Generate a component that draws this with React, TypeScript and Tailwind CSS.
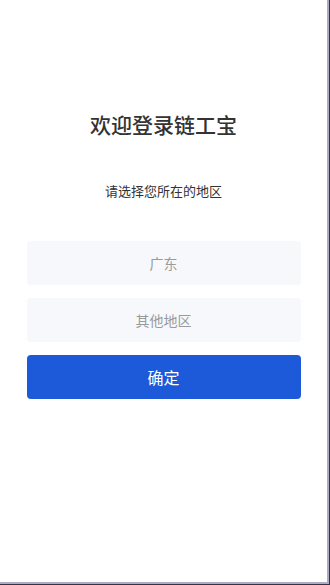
import React from "react"

const font = { fontFamily: '"Noto Sans CJK SC", "Noto Sans", sans-serif' }

const regions = ["广东", "其他地区"]

export default function App() {
  return (
    <div className="w-[330px] h-[585px] bg-[#34324a]" style={font}>
      <div className="w-[329px] h-[584px] bg-white border-r-2 border-b-2 border-[#aeacc0] flex flex-col items-center">
        {/* Heading */}
        <h1 className="mt-[108px] text-[21px] leading-[32px] text-[#333333] font-medium">欢迎登录链工宝</h1>
        <p className="mt-[41px] text-[13px] leading-[20px] text-[#333333]">请选择您所在的地区</p>

        {/* Region options */}
        <div className="mt-[40px] w-[274px] flex flex-col gap-[13px]">
          {regions.map((r) => (
            <button
              key={r}
              className="h-[44px] w-full rounded-[4px] bg-[#f7f8fb] text-[14px] text-[#9a9a9a]"
            >
              {r}
            </button>
          ))}
          <button className="h-[44px] w-full rounded-[4px] bg-[#1d5ad9] text-[16px] text-white">
            确定
          </button>
        </div>
      </div>
    </div>
  )
}
